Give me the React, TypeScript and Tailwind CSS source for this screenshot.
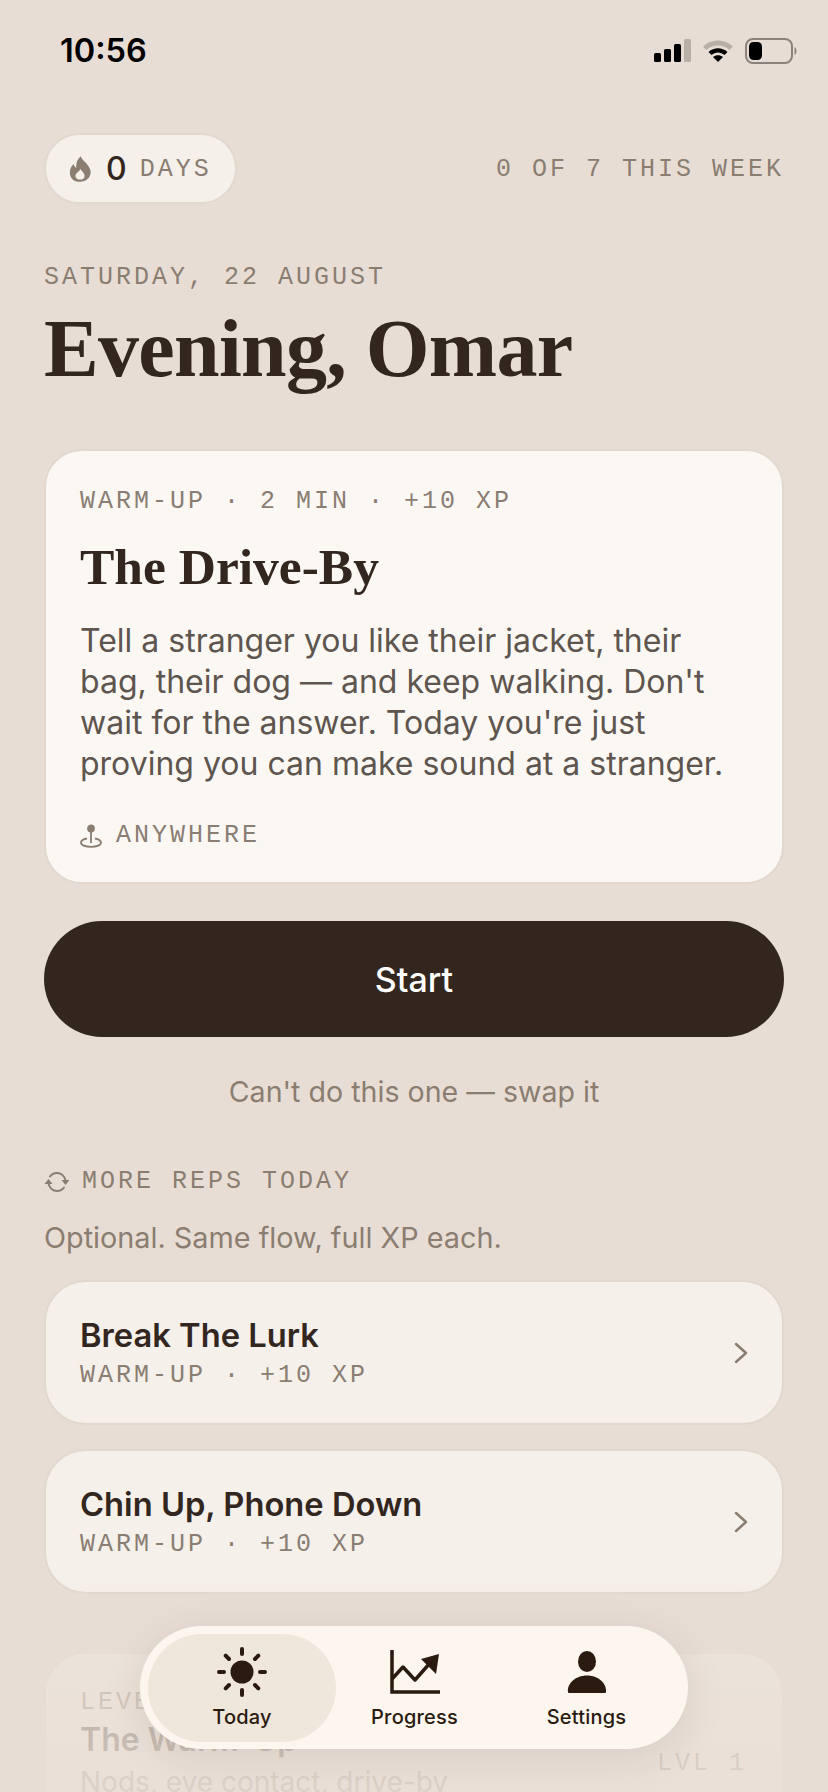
const mono = "font-['Liberation_Mono',monospace]";
const sans = "font-['Inter',sans-serif]";
const serif = "font-['Liberation_Serif',serif]";
const label = `${mono} text-[25px] leading-[30px] tracking-[3px] text-[#8a7d72]`;

function StatusIcons() {
  return (
    <div className="flex items-center gap-[11px]">
      <svg width="37" height="24" viewBox="0 0 37 24">
        <rect x="0" y="14" width="7" height="9" rx="1.5" fill="#000" />
        <rect x="10" y="10" width="7" height="13" rx="1.5" fill="#000" />
        <rect x="20" y="5" width="7" height="18" rx="1.5" fill="#000" />
        <rect x="30" y="0" width="7" height="23" rx="1.5" fill="#b8afa6" />
      </svg>
      <svg width="32" height="24" viewBox="0 0 32 24">
        <path d="M1 7.500C9 -0.500 23 -0.500 31 7.500L27.500 11C21.500 5 10.500 5 4.500 11Z" fill="#b8afa6" />
        <path d="M6.500 13C12 8 20 8 25.500 13L22.500 16C18.500 12.500 13.500 12.500 9.500 16Z" fill="#000" />
        <path d="M11 18C14 15.500 18 15.500 21 18L16 23Z" fill="#000" />
      </svg>
      <svg width="52" height="26" viewBox="0 0 52 26">
        <rect x="1" y="1" width="46" height="24" rx="7" fill="none" stroke="#8c8279" strokeWidth="2" />
        <rect x="4" y="4" width="13" height="18" rx="4.500" fill="#000" />
        <path d="M49.500 9C51 10 51.500 11.500 51.500 13C51.500 14.500 51 16 49.500 17Z" fill="#8c8279" />
      </svg>
    </div>
  );
}

function FlameIcon() {
  return (
    <svg width="22" height="28" viewBox="0 0 24 28">
      <path
        d="M13 0C14 5 22 8 23.500 16C24.500 23 19 28 12 28C5 28 0.500 23.500 1 17C1.300 13 3 10.500 5 8.500C5.500 10.500 6.500 12 8 12.500C7.500 7.500 9 3 13 0Z"
        fill="#8a7d72"
      />
      <path
        d="M12.500 14C13.500 16.500 17 18 17 21.500C17 24 15 25.500 12 25.500C9 25.500 7 23.800 7 21.500C7 18.500 11 17.500 12.500 14Z"
        fill="#f5f0e9"
      />
    </svg>
  );
}

function PinIcon() {
  return (
    <svg width="22" height="24" viewBox="0 0 22 24" fill="none" stroke="#8a7d72" strokeWidth="1.800">
      <circle cx="11" cy="4.500" r="3" fill="#8a7d72" />
      <path d="M11 7.500V19" />
      <path d="M7 14.500C3.500 15.200 1 16.600 1 18.700C1 21 5 22.800 11 22.800C17 22.800 21 21 21 18.700C21 16.600 18.500 15.200 15 14.500" />
    </svg>
  );
}

function RepeatIcon() {
  return (
    <svg width="26" height="22" viewBox="0 0 26 22" fill="none" stroke="#8a7d72" strokeWidth="2">
      <path d="M21.500 9.500C20.500 5 17 2 13 2C10 2 7.500 3.300 6 5.500" strokeLinecap="round" />
      <path d="M4.500 12.500C5.500 17 9 20 13 20C16 20 18.500 18.700 20 16.500" strokeLinecap="round" />
      <path d="M17.500 9L25.500 9L21.500 14Z" fill="#8a7d72" stroke="none" />
      <path d="M0.500 13L8.500 13L4.500 8Z" fill="#8a7d72" stroke="none" />
    </svg>
  );
}

function SunIcon() {
  return (
    <svg width="50" height="50" viewBox="0 0 50 50" fill="#2a1a10" stroke="#2a1a10" strokeWidth="4" strokeLinecap="round">
      <circle cx="25" cy="25" r="11.500" stroke="none" />
      <path d="M25 2V7M25 43V48M2 25H7M43 25H48M8.700 8.700L12 12M38 38L41.300 41.300M8.700 41.300L12 38M38 12L41.300 8.700" fill="none" />
    </svg>
  );
}

function ChartIcon() {
  return (
    <svg width="50" height="44" viewBox="0 0 50 44" fill="none" stroke="#2a1a10" strokeWidth="3.500">
      <path d="M2 0V42H50" />
      <path d="M2 29L13 17L25 30L40 13" strokeLinejoin="round" />
      <path d="M31 9L49 4L46 24Z" fill="#2a1a10" stroke="none" />
    </svg>
  );
}

function UserIcon() {
  return (
    <svg width="40" height="42" viewBox="0 0 40 42" fill="#2a1a10">
      <ellipse cx="20" cy="10.500" rx="9" ry="10.500" />
      <path d="M1 41C0 33 8 24.500 20 24.500C32 24.500 40 33 39 41C39 41.500 38.500 42 38 42H2C1.500 42 1 41.500 1 41Z" />
    </svg>
  );
}

function Chevron() {
  return (
    <svg width="16" height="24" viewBox="0 0 16 24" fill="none" stroke="#8a7d72" strokeWidth="2.500" strokeLinecap="round" strokeLinejoin="round">
      <path d="M3 3L13 12L3 21" />
    </svg>
  );
}

function RepRow({ title }: { title: string }) {
  return (
    <div className="flex h-[145px] items-center justify-between rounded-[42px] border-2 border-[#e2d8ce] bg-[#f5f0e9] pl-[34px] pr-[33px]">
      <div className="flex flex-col">
        <span className={`${sans} text-[32.7px] leading-[40px] font-semibold text-[#33261f]`}>{title}</span>
        <span className={`${label} mt-[6px]`}>WARM-UP · +10 XP</span>
      </div>
      <Chevron />
    </div>
  );
}

function NavItem({ label, icon, className }: { label: string; icon: React.ReactNode; className: string }) {
  return (
    <div className={`flex h-[108px] flex-col items-center justify-between pb-[12px] pt-[13px] ${className}`}>
      <div className="flex h-[50px] items-center justify-center">{icon}</div>
      <span className={`${sans} text-[20px] leading-[26px] font-medium tracking-[0.2px] text-[#2a1a10]`}>{label}</span>
    </div>
  );
}

export default function App() {
  return (
    <div className="relative h-[1792px] w-[828px] overflow-hidden bg-[#e8ddd4]">
      <div className="flex items-center justify-between pl-[60px] pr-[31px] pt-[31px]">
        <span className={`${sans} text-[32.5px] leading-[40px] font-semibold text-black`}>10:56</span>
        <StatusIcons />
      </div>

      <main className="px-[44px] pt-[62px]">
        <div className="flex items-center justify-between">
          <div className="flex h-[71px] w-[193px] items-center rounded-full border-2 border-[#e2d8ce] bg-[#f5f0e9] pl-[23px]">
            <FlameIcon />
            <span className={`${sans} ml-[15px] text-[32px] font-medium text-[#33261f]`}>0</span>
            <span className={`${label} ml-[13px] mt-[3px]`}>DAYS</span>
          </div>
          <span className={`${label} mt-[3px]`}>0 OF 7 THIS WEEK</span>
        </div>

        <p className={`${label} mt-[59px]`}>SATURDAY, 22 AUGUST</p>
        <h1 className={`${serif} mt-[11px] text-[82px] leading-[90px] font-bold tracking-[-0.7px] text-[#33261f]`}>Evening, Omar</h1>

        <section className="mt-[55px] h-[435px] rounded-[38px] border-2 border-[#e2d8ce] bg-[#fbf8f4] px-[34px] pt-[36px]">
          <p className={label}>WARM-UP · 2 MIN · +10 XP</p>
          <h2 className={`${serif} mt-[21px] text-[51.5px] leading-[58px] font-bold text-[#33261f]`}>The Drive-By</h2>
          <p className={`${sans} mt-[24px] text-[32px] leading-[41px] text-[#5e554e]`}>
            Tell a stranger you like their jacket, their bag, their dog — and keep walking. Don't wait for the answer. Today you're just proving you can make sound at a stranger.
          </p>
          <div className="mt-[37px] flex items-center gap-[14px]">
            <PinIcon />
            <span className={label}>ANYWHERE</span>
          </div>
        </section>

        <button className={`${sans} mt-[37px] h-[116px] w-full rounded-full bg-[#33261f] text-[34px] font-medium text-white`}>Start</button>

        <p className={`${sans} mt-[35px] text-center text-[28.6px] leading-[40px] text-[#8a7d72]`}>Can't do this one — swap it</p>

        <div className="mt-[55px] flex items-center gap-[12px]">
          <RepeatIcon />
          <span className={label}>MORE REPS TODAY</span>
        </div>
        <p className={`${sans} mt-[22px] text-[28.8px] leading-[38px] text-[#8a7d72]`}>Optional. Same flow, full XP each.</p>

        <div className="mt-[23px] flex flex-col gap-[24px]">
          <RepRow title="Break The Lurk" />
          <RepRow title="Chin Up, Phone Down" />
        </div>

        <div className="relative mt-[58px] h-[190px] rounded-[42px] border-2 border-[#e5dbd1] bg-[#f5f0e9] pl-[34px] pr-[34px] pt-[34px]">
          <p className={label}>LEVEL 1</p>
          <p className={`${sans} mt-[2px] text-[32px] leading-[40px] font-semibold text-[#33261f]`}>The Warm-Up</p>
          <p className={`${sans} mt-[3px] text-[28px] leading-[38px] text-[#8a7d72]`}>Nods, eye contact, drive-by</p>
          <span className={`${label} absolute right-[35px] top-[95px]`}>LVL 1</span>
        </div>
      </main>

      {/* fade behind the tab bar */}
      <div className="absolute inset-x-0 bottom-0 h-[210px] bg-gradient-to-b from-[#e8ddd400] via-[#e8ddd4b3] via-[30%] to-[#e8ddd4e0]" />

      <nav className="absolute left-[140px] top-[1626px] flex h-[123px] w-[548px] items-center rounded-[62px] bg-[#fdf6ee] pl-[8px] shadow-[0_8px_40px_rgba(60,40,20,0.1)]">
        <NavItem label="Today" icon={<SunIcon />} className="w-[188px] rounded-[54px] bg-[#efe6dc]" />
        <NavItem label="Progress" icon={<ChartIcon />} className="w-[157px]" />
        <NavItem label="Settings" icon={<UserIcon />} className="w-[187px]" />
      </nav>
    </div>
  );
}
